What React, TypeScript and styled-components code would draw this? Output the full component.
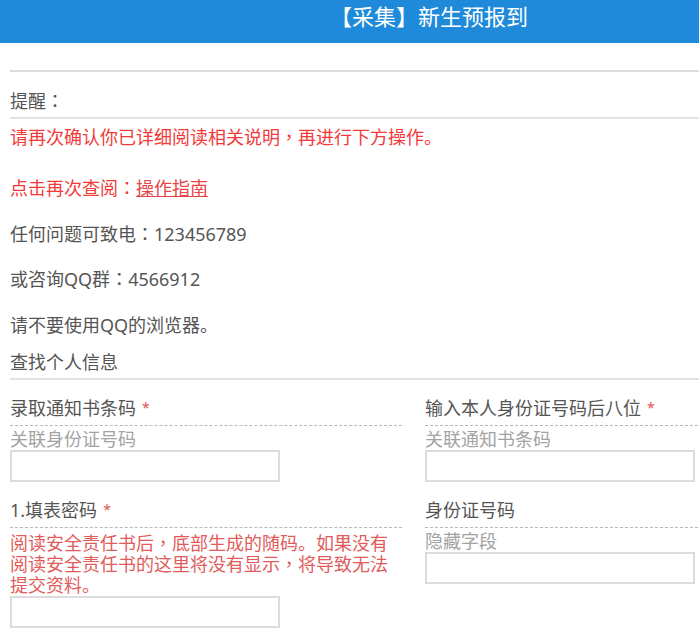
import * as React from 'react';
import styled, { createGlobalStyle } from 'styled-components';

const GlobalStyle = createGlobalStyle`
  html, body {
    margin: 0;
    padding: 0;
    overflow: hidden;
    background: #fff;
  }
  body {
    font-family: 'Noto Sans', 'Noto Sans CJK SC', sans-serif;
    color: #555;
    text-spacing-trim: space-all;
  }
`;

const Page = styled.div`
  width: 858px;
`;

const Header = styled.header`
  height: 43px;
  background: #1e8ad9;
  color: #fff;
  display: flex;
  justify-content: center;
  font-size: 22px;
  line-height: 33px;
`;

const Content = styled.main`
  padding: 0 10px;
`;

const TopRule = styled.div`
  height: 27px;
  border-bottom: 2px solid #dedede;
`;

const Heading = styled.h3<{ $top: number }>`
  margin: ${({ $top }) => $top}px 0 0;
  padding-bottom: 4px;
  font-size: 18px;
  font-weight: normal;
  line-height: 24px;
  color: #555;
  border-bottom: 2px solid #e2e2e2;
`;

const Notice = styled.div`
  display: flex;
  flex-direction: column;
  gap: 15.5px;
  padding-top: 3px;
`;

const Line = styled.p<{ $tone?: 'alert' | 'plain'; $extra?: number }>`
  margin: 0 0 ${({ $extra }) => $extra ?? 0}px;
  font-size: 18px;
  line-height: 30px;
  color: ${({ $tone }) => ($tone === 'alert' ? '#f23a3a' : '#555')};
`;

// centred full-width colon / comma, as the original font draws them
const Punct = styled.span`
  font-family: 'Noto Sans CJK TC', sans-serif;
  line-height: 0;
`;

const GuideLink = styled.a`
  color: #e8454a;
  text-decoration: underline;
`;

const FormGrid = styled.div`
  display: grid;
  grid-template-columns: 392px 1fr;
  column-gap: 23px;
  row-gap: 16px;
  padding-top: 16px;
`;

const Field = styled.div`
  display: flex;
  flex-direction: column;
  align-items: flex-start;
`;

const Label = styled.label`
  align-self: stretch;
  font-size: 18px;
  line-height: 24px;
  padding-bottom: 5px;
  border-bottom: 1px dashed #b9b9b9;
  color: #555;
`;

const Star = styled.span`
  color: #e05555;
  font-size: 14px;
  margin-left: 6px;
  vertical-align: top;
`;

const Help = styled.div<{ $warn?: boolean }>`
  font-size: 18px;
  line-height: ${({ $warn }) => ($warn ? 21 : 22)}px;
  margin-top: ${({ $warn }) => ($warn ? 5 : 2)}px;
  color: ${({ $warn }) => ($warn ? '#e25b5b' : '#a3a3a3')};
`;

const Input = styled.input`
  box-sizing: border-box;
  width: 270px;
  height: 32px;
  margin: 0;
  border: 2px solid #dcdcdc;
  background: #fff;
  outline: none;
`;

function withPunct(text: string) {
  return text.split(/([：，])/).map((part, i) =>
    part === '：' || part === '，' ? <Punct key={i}>{part}</Punct> : part
  );
}

type FieldDef = { label: string; required?: boolean; help: string; warn?: boolean };

const fields: FieldDef[] = [
  { label: '录取通知书条码', required: true, help: '关联身份证号码' },
  { label: '输入本人身份证号码后八位', required: true, help: '关联通知书条码' },
  {
    label: '1.填表密码',
    required: true,
    warn: true,
    help: '阅读安全责任书后，底部生成的随码。如果没有阅读安全责任书的这里将没有显示，将导致无法提交资料。',
  },
  { label: '身份证号码', help: '隐藏字段' },
];

export default function App() {
  return (
    <Page>
      <GlobalStyle />
      <Header>【采集】新生预报到</Header>
      <Content>
        <TopRule />
        <Heading $top={17}>{withPunct('提醒：')}</Heading>
        <Notice>
          <Line $tone='alert' $extra={5.5}>
            {withPunct('请再次确认你已详细阅读相关说明，再进行下方操作。')}
          </Line>
          <Line $tone='alert'>
            {withPunct('点击再次查阅：')}
            <GuideLink href='#'>操作指南</GuideLink>
          </Line>
          <Line>{withPunct('任何问题可致电：123456789')}</Line>
          <Line>{withPunct('或咨询QQ群：4566912')}</Line>
          <Line>请不要使用QQ的浏览器。</Line>
        </Notice>
        <Heading $top={10.5}>查找个人信息</Heading>
        <FormGrid>
          {fields.map((f) => (
            <Field key={f.label}>
              <Label>
                {f.label}
                {f.required && <Star>*</Star>}
              </Label>
              <Help $warn={f.warn}>{withPunct(f.help)}</Help>
              <Input type='text' />
            </Field>
          ))}
        </FormGrid>
      </Content>
    </Page>
  );
}
